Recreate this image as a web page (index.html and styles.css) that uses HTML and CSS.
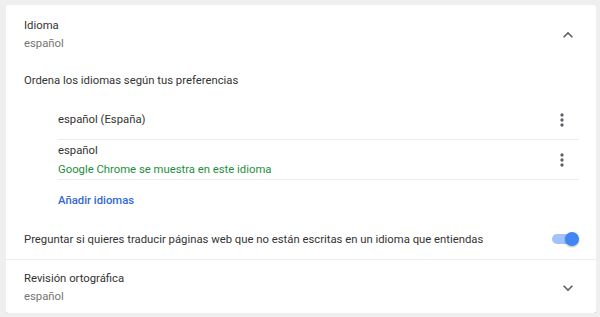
FILE: index.html
```html
<!DOCTYPE html>
<html lang="es">
<head>
  <meta charset="utf-8">
  <title>Idioma</title>
  <link rel="stylesheet" href="styles.css">
</head>
<body>
  <div class="card">
    <!-- Idioma section header -->
    <div class="expand-row">
      <div class="expand-text">
        <div class="title">Idioma</div>
        <div class="secondary">español</div>
      </div>
      <svg class="chevron" viewBox="0 0 24 24"><path d="M12 8l-6 6 1.41 1.41L12 10.83l4.59 4.58L18 14z"/></svg>
    </div>

    <div class="section-body">
      <div class="hint">Ordena los idiomas según tus preferencias</div>
      <div class="lang-list">
        <div class="lang-row">
          <div class="lang-text">español (España)</div>
          <svg class="more" viewBox="0 0 24 24"><circle cx="12" cy="6" r="2"/><circle cx="12" cy="12" r="2"/><circle cx="12" cy="18" r="2"/></svg>
        </div>
        <div class="lang-row two-line">
          <div class="lang-text">
            <div class="lang-name">español</div>
            <div class="lang-note">Google Chrome se muestra en este idioma</div>
          </div>
          <svg class="more" viewBox="0 0 24 24"><circle cx="12" cy="6" r="2"/><circle cx="12" cy="12" r="2"/><circle cx="12" cy="18" r="2"/></svg>
        </div>
        <div class="add-row"><a href="#">Añadir idiomas</a></div>
      </div>
      <div class="toggle-row">
        <div>Preguntar si quieres traducir páginas web que no están escritas en un idioma que entiendas</div>
        <div class="toggle on"><span class="bar"></span><span class="knob"></span></div>
      </div>
    </div>

    <!-- Spell check section header -->
    <div class="expand-row last">
      <div class="expand-text">
        <div class="title">Revisión ortográfica</div>
        <div class="secondary">español</div>
      </div>
      <svg class="chevron" viewBox="0 0 24 24"><path d="M16.59 8.59L12 13.17 7.41 8.59 6 10l6 6 6-6z"/></svg>
    </div>
  </div>
</body>
</html>
```

FILE: styles.css
```css
body {
  margin: 5px 4px 0 6px;
  background-color: #efefef;
  font-family: Roboto, "Liberation Sans", sans-serif;
  font-size: 11.3px;
  color: #333;
}

.card {
  background-color: #fff;
  border-radius: 2px;
  box-shadow: 0 1px 2px rgba(0, 0, 0, 0.25), 1px 1px 2px rgba(0, 0, 0, 0.1);
}

.expand-row {
  display: flex;
  align-items: center;
  justify-content: space-between;
  padding: 12px 18px 8px 18px;
}

.expand-row.last {
  padding: 10px 18px 7px 18px;
  border-top: 1px solid #ededed;
}

.title, .secondary {
  line-height: 18px;
}

.secondary {
  color: #757575;
}

.chevron {
  width: 20px;
  height: 20px;
  fill: #616161;
}

.section-body {
  padding: 11px 0 0 18px;
}

.hint {
  line-height: 18px;
}

.lang-list {
  margin: 10px 17px 0 34px;
}

.lang-row {
  display: flex;
  align-items: center;
  justify-content: space-between;
  height: 39px;
  border-bottom: 1px solid #ededed;
}

.lang-row.two-line .lang-name {
  line-height: 21px;
}

.lang-note {
  line-height: 18px;
  color: #1e8e3e;
}

.more {
  width: 20px;
  height: 20px;
  margin-right: 7px;
  fill: #5f6368;
}

.add-row {
  height: 40px;
  display: flex;
  align-items: center;
}

.add-row a {
  color: #3367d6;
  font-weight: 500;
  text-decoration: none;
}

.toggle-row {
  display: flex;
  align-items: center;
  justify-content: space-between;
  height: 39px;
  padding-right: 17px;
}

.toggle {
  position: relative;
  width: 27px;
  height: 14px;
  margin-top: -2px;
}

.toggle .bar {
  position: absolute;
  left: 0;
  top: 2px;
  width: 26px;
  height: 10px;
  border-radius: 5px;
  background-color: #a1c2fa;
}

.toggle .knob {
  position: absolute;
  right: 0;
  top: 0;
  width: 14px;
  height: 14px;
  border-radius: 50%;
  background-color: #4285f4;
  box-shadow: 0 1px 2px rgba(0, 0, 0, 0.3);
}
```
